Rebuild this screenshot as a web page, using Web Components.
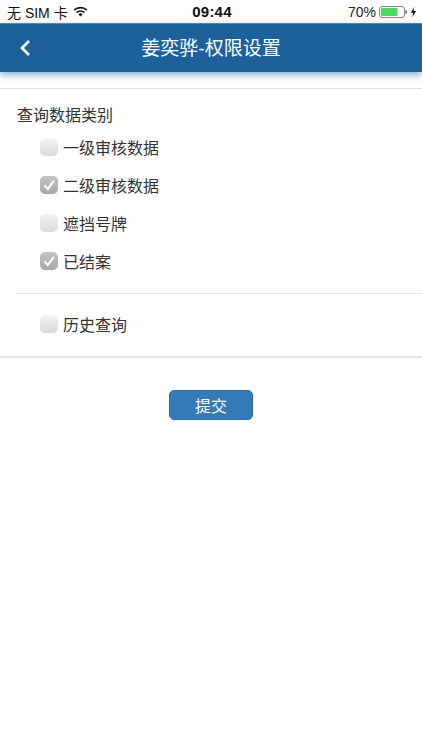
<!DOCTYPE html>
<html lang="zh">
<head>
<meta charset="utf-8">
<title>权限设置</title>
<style>
  html, body { margin: 0; padding: 0; background: #fff; }
  body { width: 422px; height: 750px; overflow: hidden; font-family: "Liberation Sans", "Noto Sans CJK SC", sans-serif; color: #333; }
</style>
</head>
<body>
<status-bar></status-bar>
<nav-bar>姜奕骅-权限设置</nav-bar>
<perm-form></perm-form>

<script>
class StatusBar extends HTMLElement {
  constructor() {
    super();
    this.attachShadow({ mode: 'open' });
    this.shadowRoot.innerHTML = `
      <style>
        :host { display: grid; grid-template-columns: 1fr auto 1fr; align-items: center; height: 23px; padding: 0 6px 0 7px; font-size: 14px; color: #111; box-sizing: border-box; }
        .left, .right { display: flex; align-items: center; }
        .left { gap: 5px; }
        .right { justify-content: flex-end; }
        .time { font-weight: 700; font-size: 15px; letter-spacing: .2px; margin-left: 1px; }
        .pct { font-size: 14px; color: #222; margin-right: 3px; }
        svg { display: block; }
      </style>
      <div class="left">
        <span>无 SIM 卡</span>
        <svg width="15" height="11" viewBox="0 0 15 11">
          <path d="M.6 3.6a9.8 9.8 0 0 1 13.8 0l-1.1 1.2a8.2 8.2 0 0 0-11.6 0z" fill="#111"/>
          <path d="M3 6a6.4 6.4 0 0 1 9 0l-1.1 1.2a4.8 4.8 0 0 0-6.8 0z" fill="#111"/>
          <path d="M5.3 8.3a3.2 3.2 0 0 1 4.4 0l-2.2 2.3z" fill="#111"/>
        </svg>
      </div>
      <span class="time">09:44</span>
      <div class="right">
        <span class="pct">70%</span>
        <svg width="37" height="12" viewBox="0 0 37 12">
          <rect x=".5" y=".5" width="25" height="11" rx="2.5" fill="#fff" stroke="#8a8a8a"/>
          <rect x="2" y="2" width="16.5" height="8" rx="1" fill="#4cd964"/>
          <path d="M26.5 4v4c1-.2 1.5-1 1.5-2s-.5-1.8-1.500-2z" fill="#555"/>
          <path d="M35.500.8 31.800 6.800h2.400l-.8 4.400 3.600-6.200h-2.500z" fill="#111"/>
        </svg>
      </div>`;
  }
}

class NavBar extends HTMLElement {
  constructor() {
    super();
    this.attachShadow({ mode: 'open' });
    this.shadowRoot.innerHTML = `
      <style>
        :host { display: grid; grid-template-columns: 50px 1fr 50px; align-items: center; height: 49px; background: #1c6199; color: #fff; font-size: 19px; box-shadow: 0 3px 7px rgba(28, 97, 153, .5); border-top: 1px solid #4d88ba; box-sizing: border-box; }
        .back { padding-left: 19px; display: flex; }
        .title { text-align: center; font-weight: 400; padding-bottom: 4px; }
      </style>
      <div class="back">
        <svg width="12" height="18" viewBox="0 0 12 18"><path d="M10 2 3 9l7 7" fill="none" stroke="#fff" stroke-width="2.600"/></svg>
      </div>
      <div class="title"><slot></slot></div>
      <div></div>`;
  }
}

class PermCheck extends HTMLElement {
  constructor() {
    super();
    this.attachShadow({ mode: 'open' });
    const checked = this.hasAttribute('checked');
    this.shadowRoot.innerHTML = `
      <style>
        :host { display: flex; align-items: center; gap: 5px; height: 38px; font-size: 16px; color: #333; }
        .box { width: 18px; height: 18px; border-radius: 5px; display: flex; align-items: center; justify-content: center;
               background: ${checked ? 'linear-gradient(#c4c4c4, #a8a8a8)' : 'linear-gradient(#f4f4f4, #d9d9d9)'}; }
      </style>
      <span class="box">${checked ? '<svg width="14" height="14" viewBox="0 0 14 14"><path d="M2.500 7.200 5.800 11 11.800 2.800" fill="none" stroke="#fff" stroke-width="2.200"/></svg>' : ''}</span>
      <span><slot></slot></span>`;
  }
}

class PermForm extends HTMLElement {
  constructor() {
    super();
    this.attachShadow({ mode: 'open' });
    this.shadowRoot.innerHTML = `
      <style>
        :host { display: block; padding-top: 16px; }
        hr { border: 0; height: 1px; background: #e2e2e2; margin: 0; }
        hr.end { height: 2px; }
        .head { font-size: 16px; color: #333; padding: 17px 17px 0; line-height: 20px; }
        .group { padding: 2px 0 0 40px; }
        .inset { margin: 13px 0 0 17px; }
        .hist { padding: 11px 0 13px 40px; }
        .actions { display: flex; justify-content: center; padding-top: 32px; }
        button { width: 84px; height: 30px; border: 1px solid #2e6da4; border-radius: 5px; background: #337ab7; color: #fff; font: inherit; font-size: 16px; padding: 0 0 1px; }
      </style>
      <hr>
      <div class="head">查询数据类别</div>
      <div class="group">
        <perm-check>一级审核数据</perm-check>
        <perm-check checked>二级审核数据</perm-check>
        <perm-check>遮挡号牌</perm-check>
        <perm-check checked>已结案</perm-check>
      </div>
      <hr class="inset">
      <div class="hist"><perm-check>历史查询</perm-check></div>
      <hr class="end">
      <div class="actions"><button>提交</button></div>`;
  }
}

customElements.define('status-bar', StatusBar);
customElements.define('nav-bar', NavBar);
customElements.define('perm-check', PermCheck);
customElements.define('perm-form', PermForm);
</script>
</body>
</html>
